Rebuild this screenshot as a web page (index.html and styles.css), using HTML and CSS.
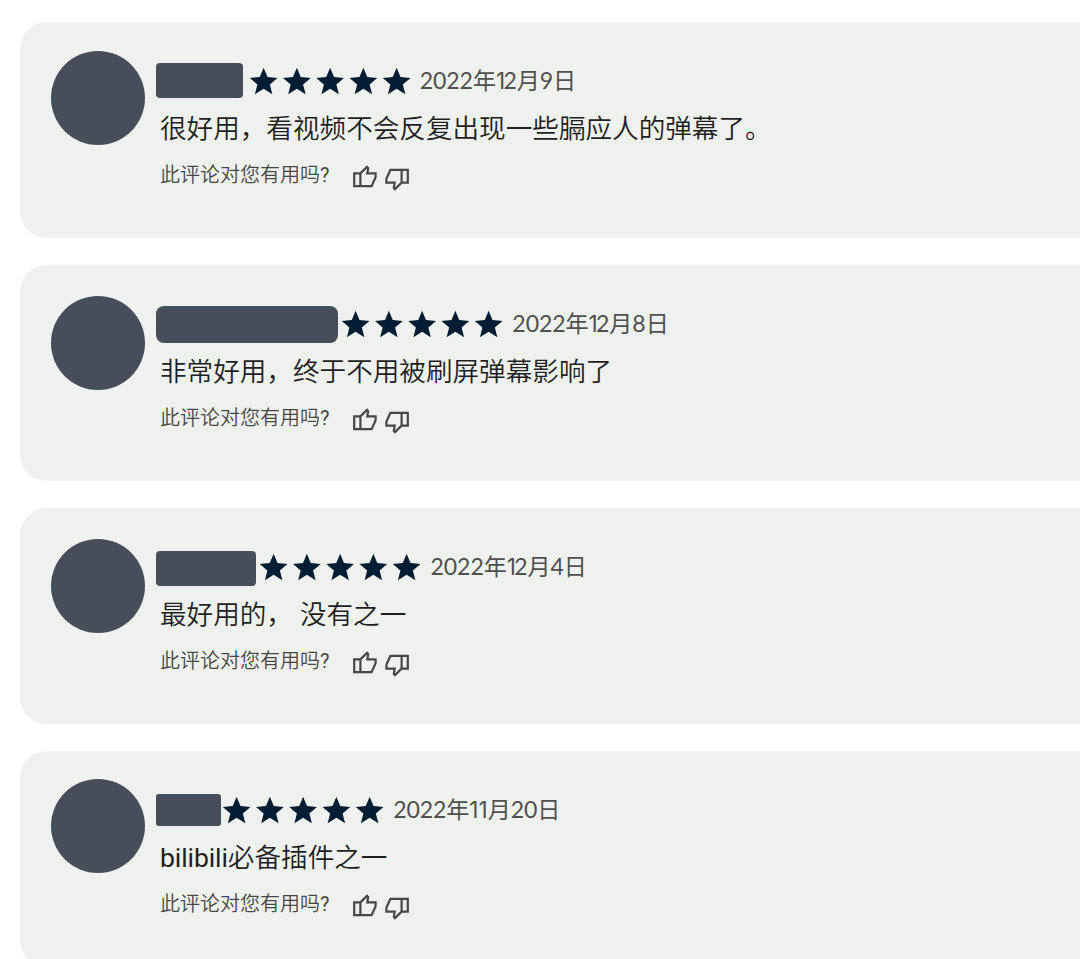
FILE: index.html
```
<!DOCTYPE html>
<html lang="zh-CN">
<head>
<meta charset="UTF-8">
<title>评论</title>
<link rel="stylesheet" href="styles.css">
</head>
<body>
   <svg class="symbols">
      <symbol id="stars" viewBox="0 0 120 24">
         <path id="star" d="M12 17.1L18.3 21.2 16.5 14 22 9.3 14.8 8.7 12 1.9 9.2 8.7 2 9.3 7.5 14 5.7 21.2z"/>
         <use href="#star" x="24"/>
         <use href="#star" x="48"/>
         <use href="#star" x="72"/>
         <use href="#star" x="96"/>
      </symbol>
      <symbol id="thumb" viewBox="0 0 24 24">
         <path d="M1.2 8.4V21.2H18.6L22.6 12.2V8.4H14.3L15.2 3.2 14 1.9 7.4 8.4zM7.4 8.4V21.2"/>
      </symbol>
   </svg>
   <div class="reviews">
      <div class="review first">
         <div class="avatar"></div>
         <div class="content">
            <div class="head">
               <span class="name"></span>
               <svg class="stars"><use href="#stars"/></svg>
               <span class="date">2022年<span class="one">1</span>2月9日</span>
            </div>
            <p class="text">很好用，看视频不会反复出现一些膈应人的弹幕了。</p>
            <div class="helpful">
               <span class="question">此评论对您有用吗<span class="latin">?</span></span>
               <svg class="thumb"><use href="#thumb"/></svg>
               <svg class="thumb down"><use href="#thumb"/></svg>
            </div>
         </div>
      </div>
      <div class="review second">
         <div class="avatar"></div>
         <div class="content">
            <div class="head">
               <span class="name"></span>
               <svg class="stars"><use href="#stars"/></svg>
               <span class="date">2022年<span class="one">1</span>2月8日</span>
            </div>
            <p class="text">非常好用，终于不用被刷屏弹幕影响了</p>
            <div class="helpful">
               <span class="question">此评论对您有用吗<span class="latin">?</span></span>
               <svg class="thumb"><use href="#thumb"/></svg>
               <svg class="thumb down"><use href="#thumb"/></svg>
            </div>
         </div>
      </div>
      <div class="review third">
         <div class="avatar"></div>
         <div class="content">
            <div class="head">
               <span class="name"></span>
               <svg class="stars"><use href="#stars"/></svg>
               <span class="date">2022年<span class="one">1</span>2月4日</span>
            </div>
            <p class="text">最好用的， 没有之一</p>
            <div class="helpful">
               <span class="question">此评论对您有用吗<span class="latin">?</span></span>
               <svg class="thumb"><use href="#thumb"/></svg>
               <svg class="thumb down"><use href="#thumb"/></svg>
            </div>
         </div>
      </div>
      <div class="review fourth">
         <div class="avatar"></div>
         <div class="content">
            <div class="head">
               <span class="name"></span>
               <svg class="stars"><use href="#stars"/></svg>
               <span class="date">2022年<span class="one">11</span>月20日</span>
            </div>
            <p class="text"><span class="latin">bilibili</span>必备插件之一</p>
            <div class="helpful">
               <span class="question">此评论对您有用吗<span class="latin">?</span></span>
               <svg class="thumb"><use href="#thumb"/></svg>
               <svg class="thumb down"><use href="#thumb"/></svg>
            </div>
         </div>
      </div>
   </div>
</body>
</html>
```
FILE: styles.css
```
* {
  box-sizing: border-box;
}
body {
  margin: 0;
  height: 959px;
  overflow: hidden;
  background-color: #fff;
  font-family: "Noto Sans CJK SC", sans-serif;
  font-weight: 350;
}
.symbols {
  display: none;
}
.reviews {
  display: flex;
  flex-direction: column;
  gap: 27px;
  padding: 22px 0 0 20px;
}
.review {
  display: flex;
  flex-shrink: 0;
  height: 216px;
  padding-left: 31px;
  border-radius: 27px 0 0 27px;
  background-color: #eff1ee;
}
.avatar {
  flex-shrink: 0;
  width: 94px;
  height: 94px;
  margin: 31px 11.3px 0 0;
  border-radius: 50%;
  background-color: #474d5a;
}
.content {
  padding-top: 41px;
}
.head {
  display: flex;
  align-items: flex-start;
  height: 44px;
}
.name {
  height: 35px;
  border-radius: 4px;
  background-color: #474d5a;
}
.stars {
  width: 166.25px;
  height: 33.25px;
  margin-top: 2px;
  fill: #001d35;
}
.date {
  margin: -1px 0 0 6.8px;
  font-family: Lato, "Noto Sans CJK SC", sans-serif;
  font-size: 23.1px;
  font-weight: 400;
  line-height: 36px;
  letter-spacing: -0.1px;
  color: #505050;
}
.one {
  font-family: Inter, sans-serif;
  font-size: 22.5px;
  letter-spacing: -1.6px;
}
.text {
  margin: -2px 0 0 3.7px;
  height: 44px;
  font-size: 26.6px;
  line-height: 43px;
  word-spacing: 1px;
  color: #1f1f1f;
}
.latin {
  font-family: Roboto, sans-serif;
  font-weight: 400;
  letter-spacing: -0.1px;
}
.helpful {
  display: flex;
  align-items: flex-start;
  margin-left: 3.7px;
  font-size: 20px;
  line-height: 50px;
  color: #474747;
}
.question {
  width: 193px;
}
.thumb {
  width: 24px;
  height: 24px;
  margin: 16px 8px 0 0;
  fill: none;
  stroke: #474747;
  stroke-width: 2.2;
}
.down {
  margin-top: 18px;
  transform: rotate(180deg);
}
.first .avatar {
  margin-top: 29px;
}
.first .name {
  width: 86.5px;
  margin-right: 3.9px;
}
.second .name {
  width: 181.5px;
  height: 37px;
  margin-right: 1.5px;
  border-radius: 8px;
}
.third .name {
  width: 100px;
  margin: 2px 1.2px 0 0;
}
.fourth .avatar {
  margin-top: 28px;
}
.fourth .name {
  width: 65px;
  height: 32px;
  margin: 2px -1.2px 0 0;
  border-radius: 3px;
}
.fourth .one {
  letter-spacing: 0;
}
```
